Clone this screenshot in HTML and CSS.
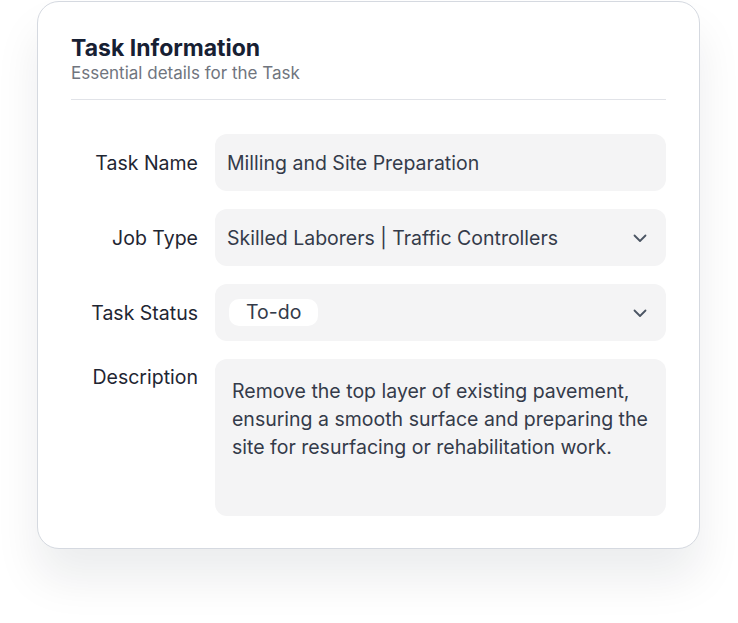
FILE: index.html
```html
<!DOCTYPE html>
<html lang="en">
<head>
    <meta charset="UTF-8">
    <meta name="viewport" content="width=device-width, initial-scale=1.0">
    <title>Task Information</title>
    <link rel="stylesheet" href="styles.css">
</head>
<body>
<div class="card">
    <div class="card-head">
        <h1>Task Information</h1>
        <p>Essential details for the Task</p>
    </div>

    <div class="form">
        <div class="row">
            <label>Task Name</label>
            <div class="field">Milling and Site Preparation</div>
        </div>

        <div class="row">
            <label>Job Type</label>
            <div class="field select">
                <span>Skilled Laborers | Traffic Controllers</span>
                <svg class="chevron" viewBox="0 0 16 16" width="16" height="16"><path d="M2.5 5.5 8 11l5.5-5.5" fill="none" stroke="#4b5563" stroke-width="1.8" stroke-linecap="round" stroke-linejoin="round"/></svg>
            </div>
        </div>

        <div class="row">
            <label>Task Status</label>
            <div class="field select">
                <span class="chip">To-do</span>
                <svg class="chevron" viewBox="0 0 16 16" width="16" height="16"><path d="M2.5 5.5 8 11l5.5-5.5" fill="none" stroke="#4b5563" stroke-width="1.8" stroke-linecap="round" stroke-linejoin="round"/></svg>
            </div>
        </div>

        <div class="row top">
            <label>Description</label>
            <div class="field area">Remove the top layer of existing pavement, ensuring a smooth surface and preparing the site for resurfacing or rehabilitation work.</div>
        </div>
    </div>
</div>
</body>
</html>
```

FILE: styles.css
```css
html, body {
    margin: 0;
    padding: 0;
    background: #fff;
    font-family: Inter, "Noto Sans", sans-serif;
}
body {
    min-height: 100vh;
    padding-top: 1px;
    box-sizing: border-box;
}
.card {
    margin-left: 37px;
    width: 663px;
    height: 548px;
    box-sizing: border-box;
    padding: 32px 33px 34px 33px;
    background: #fff;
    border: 1px solid #d5d9e0;
    border-radius: 22px;
    box-shadow: 0 30px 45px rgba(17, 24, 39, 0.08);
}
.card-head {
    border-bottom: 1.5px solid #e1e3e8;
    padding-bottom: 15px;
}
.card-head h1 {
    margin: 0;
    font-size: 23px;
    line-height: 28px;
    font-weight: 700;
    color: #172033;
}
.card-head p {
    margin: 0;
    font-size: 17px;
    line-height: 22px;
    color: #70757e;
}
.form {
    margin-top: 34px;
    display: flex;
    flex-direction: column;
    gap: 18px;
}
.row {
    display: flex;
    align-items: center;
    gap: 17px;
}
.row.top {
    align-items: flex-start;
}
.row label {
    width: 127px;
    flex-shrink: 0;
    text-align: right;
    font-size: 19.5px;
    color: #1f2633;
}
.row.top label {
    padding-top: 6px;
}
.field {
    flex: 1;
    height: 57px;
    box-sizing: border-box;
    padding: 0 12px;
    background: #f4f4f5;
    border-radius: 12px;
    display: flex;
    align-items: center;
    font-size: 19.5px;
    color: #343b4a;
}
.select {
    justify-content: space-between;
    padding-right: 18px;
}
.chevron {
    flex-shrink: 0;
}
.chip {
    background: #fff;
    border-radius: 10px;
    padding: 0 17px;
    height: 27px;
    line-height: 27px;
    margin-left: 2px;
}
.area {
    height: 157px;
    align-items: flex-start;
    padding: 18px 8px 0 17px;
    line-height: 28px;
}
```
